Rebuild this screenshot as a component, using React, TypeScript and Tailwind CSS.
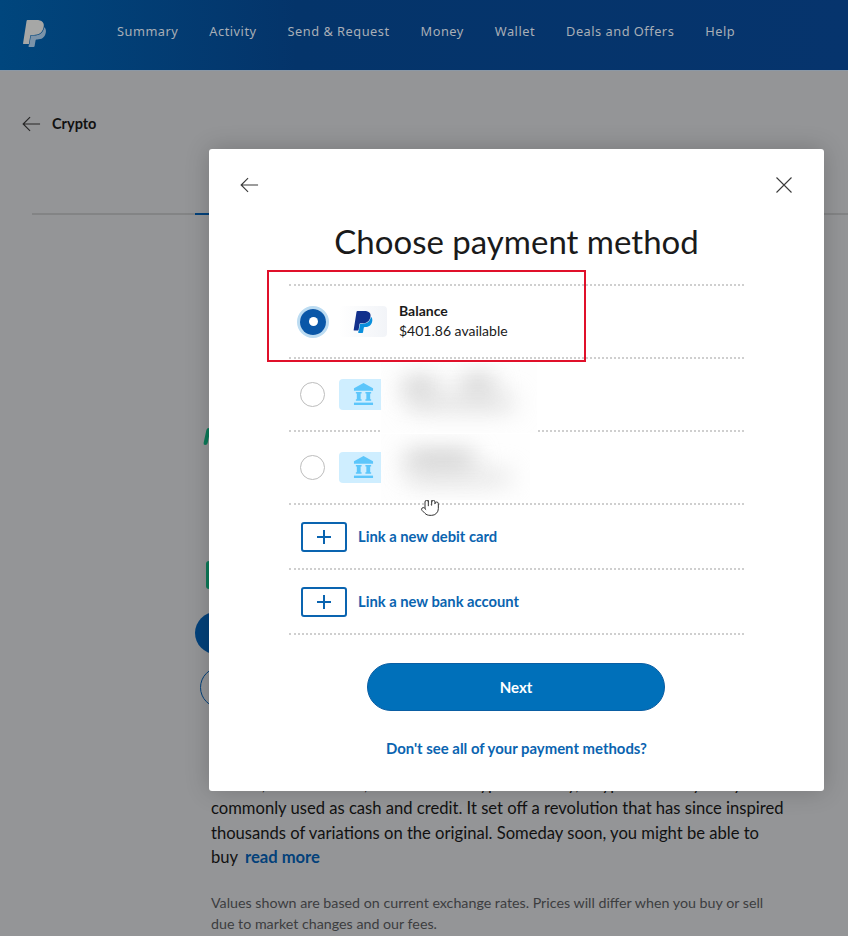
import { Hand } from 'lucide-react';

const navItems = ['Summary', 'Activity', 'Send & Request', 'Money', 'Wallet', 'Deals and Offers', 'Help'];

const backPath = 'M7.076 21.337H2.47a.641.641 0 0 1-.633-.74L4.944.901C5.026.382 5.474 0 5.998 0h7.46c2.57 0 4.578.543 5.69 1.81 1.01 1.15 1.304 2.42 1.012 4.287-.023.143-.047.288-.077.437-.983 5.05-4.349 6.797-8.647 6.797h-2.19c-.524 0-.968.382-1.05.9l-1.12 7.106z';
const frontPath = 'M21.222 6.917a3.35 3.35 0 0 0-.607-.541c-.013.076-.026.175-.041.254-.93 4.778-4.005 7.201-9.138 7.201h-2.19a.563.563 0 0 0-.556.479l-1.187 7.527h-.506l-.24 1.516a.56.56 0 0 0 .554.647h3.882c.46 0 .85-.334.922-.788.06-.26.76-4.852.816-5.09a.932.932 0 0 1 .923-.788h.58c3.76 0 6.705-1.528 7.565-5.946.36-1.847.174-3.388-.777-4.471z';

function PayPalMark({ className, top, under }: { className: string; top: string; under: string }) {
  return (
    <svg viewBox="0 0 24 24" className={className}>
      <path d={frontPath} fill={under} />
      <path d={backPath} fill={top} />
    </svg>
  );
}

function BackArrow({ className }: { className: string }) {
  return (
    <svg viewBox="0 0 20 16" fill="none" stroke="currentColor" strokeWidth="1.2" className={className}>
      <path d="M19 8H1.2M8.5.8 1.2 8l7.3 7.2" />
    </svg>
  );
}

function BankIcon() {
  return (
    <svg viewBox="0 0 22 24" className="h-[23px] w-[21px]" fill="#5cc6fb">
      <path d="M11 0 21 5.5V8H1V5.500z" />
      <path d="M3 9.500h6V11H8v6h1V18.500H3V17h1v-6H3zM13 9.500h6V11h-1v6h1v1.500h-6V17h1v-6h-1z" />
      <path d="M1 20.500h20V23H1z" />
    </svg>
  );
}

function BankRow() {
  return (
    <div className="flex h-[73px] items-center border-t-2 border-dotted border-[#cfcfcf] pl-[11px]">
      <div className="h-[25px] w-[25px] rounded-full border-[1.5px] border-[#bdbdbd]" />
      <div className="ml-[14px] flex h-[31px] w-[48px] items-center justify-center rounded-sm bg-[#cfeeff]">
        <BankIcon />
      </div>
    </div>
  );
}

function AddRow({ label }: { label: string }) {
  return (
    <div className="flex h-[65px] items-center border-t-2 border-dotted border-[#cfcfcf] pl-[12px]">
      <div className="flex h-[30px] w-[46px] items-center justify-center rounded-[3px] border-2 border-[#0a64b0]">
        <svg viewBox="0 0 14 14" className="h-[14px] w-[14px]" stroke="#0a64b0" strokeWidth="2"><path d="M7 0v14M0 7h14" /></svg>
      </div>
      <span className="ml-[11px] text-[14.750px] font-bold text-[#0a64b0]">{label}</span>
    </div>
  );
}

export default function App() {
  return (
    <div className="relative h-[936px] w-[848px] overflow-hidden bg-[#949597] font-['Lato',sans-serif]">
      <header className="flex h-[71px] items-start border-b border-[#8b98a6] bg-[linear-gradient(90deg,#00467d,#04346a_35%,#06346d)] pt-[20px] pl-[21px]">
        <PayPalMark className="h-[27px] w-[27px]" top="#a6a7a6" under="#7b93a9" />
        <nav className="ml-[69px] flex gap-[31px] pt-[2px] font-['Noto_Sans',sans-serif] text-[12.800px] tracking-[0.5px] text-[#a8aeb6]">
          {navItems.map((n) => <span key={n}>{n}</span>)}
        </nav>
      </header>

      <main>
        <div className="flex items-center pt-[42px] pl-[22px]">
          <BackArrow className="h-[16px] w-[19px] text-[#262626]" />
          <span className="ml-[11px] text-[14.500px] font-bold text-[#111]">Crypto</span>
        </div>

        <div className="mt-[78px] ml-[32px] flex h-[2px] bg-[#838485]">
          <div className="ml-[163px] h-[2px] w-[120px] bg-[#03417a]" />
        </div>

        <div className="pl-[195px]">
          <div className="mt-[213px] ml-[10px] h-[17px] w-[4px] -skew-x-12 rounded-sm bg-[#0b7a58]" />
          <div className="mt-[116px] ml-[11px] h-[28px] w-[4px] rounded-l-[3px] bg-[#0b7a58]" />
          <div className="mt-[23px] h-[42px] w-[42px] rounded-full bg-[#03417a]" />
          <div className="mt-[13px] ml-[5px] h-[41px] w-[41px] rounded-full border border-[#03417a]" />
        </div>

        <div className="mt-[64px] ml-[211px] whitespace-nowrap text-[16.600px] leading-[24.500px] text-[#111]">
          <p>
            Bitcoin, born in 2009, was the first cryptocurrency, a type of money not yet<br />
            commonly used as cash and credit. It set off a revolution that has since inspired<br />
            thousands of variations on the original. Someday soon, you might be able to<br />
            buy <span className="ml-[3px] font-bold text-[#03417a]">read more</span>
          </p>
          <p className="mt-[22px] text-[14.250px] leading-[21px] text-[#3c3d3f]">
            Values shown are based on current exchange rates. Prices will differ when you buy or sell<br />
            due to market changes and our fees.
          </p>
        </div>
      </main>

      <div className="absolute top-[149px] left-[209px] h-[642px] w-[615px] rounded-[3px] bg-white shadow-[0_0_24px_rgba(0,0,0,0.2)]">
        <div className="flex items-center justify-between px-[31px] pt-[28px]">
          <BackArrow className="h-[16px] w-[19px] text-[#3a3a3a]" />
          <svg viewBox="0 0 16 16" fill="none" stroke="#3a3a3a" strokeWidth="1.1" className="mr-[1px] h-[16px] w-[16px]">
            <path d="M.5.500l15 15M15.500.500l-15 15" />
          </svg>
        </div>

        <h1 className="mt-[28px] text-center text-[33px] leading-[40px] text-[#1a1a1a]">Choose payment method</h1>

        <div className="relative mt-[23px] ml-[80px] w-[455px]">
          <div className="flex h-[73px] items-center border-t-2 border-dotted border-[#cfcfcf] pl-[8px]">
            <div className="flex h-[32px] w-[32px] items-center justify-center rounded-full border-[3px] border-[#bcdcf2]">
              <div className="flex h-[26px] w-[26px] shrink-0 items-center justify-center rounded-full bg-[#0a57a8]">
                <div className="h-[9px] w-[9px] rounded-full bg-white" />
              </div>
            </div>
            <div className="ml-[10px] flex h-[31px] w-[48px] items-center justify-center rounded-sm bg-gradient-to-r from-white to-[#f2f4f8]">
              <PayPalMark className="h-[22px] w-[22px]" top="#12308c" under="#0a8fdc" />
            </div>
            <div className="ml-[12px] -mt-[2px] text-[14px] leading-[20px] text-[#1a1a1a]">
              <div className="font-bold">Balance</div>
              <div>$401.86 available</div>
            </div>
          </div>
          <BankRow />
          <BankRow />
          <AddRow label="Link a new debit card" />
          <AddRow label="Link a new bank account" />
          <div className="border-t-2 border-dotted border-[#cfcfcf]" />

          <Hand size={20} strokeWidth={1.2} fill="white" className="absolute top-[213px] left-[131px] text-[#333]" />

          <div className="absolute top-[79px] left-[92px] h-[70px] w-[156px] overflow-hidden bg-[#fefefe]">
            <div className="absolute top-[16px] left-[22px] h-[16px] w-[34px] rounded-full bg-[#c4c4c4] blur-md" />
            <div className="absolute top-[14px] left-[80px] h-[16px] w-[34px] rounded-full bg-[#c4c4c4] blur-md" />
            <div className="absolute top-[34px] left-[26px] h-[12px] w-[108px] rounded-full bg-[#d4d4d4] blur-md" />
          </div>
          <div className="absolute top-[150px] left-[92px] h-[66px] w-[149px] overflow-hidden bg-[#fefefe]">
            <div className="absolute top-[18px] left-[24px] h-[16px] w-[70px] rounded-full bg-[#c4c4c4] blur-md" />
            <div className="absolute top-[38px] left-[26px] h-[11px] w-[104px] rounded-full bg-[#d8d8d8] blur-md" />
          </div>

          <div className="absolute -top-[14px] -left-[22px] h-[92px] w-[319px] border-2 border-[#e0102a]" />
        </div>

        <div className="mt-[28px] ml-[158px]">
          <button className="h-[48px] w-[298px] rounded-full border border-[#0a5ea3] bg-[#0070ba] text-[15px] font-bold text-white">Next</button>
        </div>
        <div className="mt-[26px] text-center text-[14.900px] font-bold text-[#0a64b0]">Don't see all of your payment methods?</div>
      </div>
    </div>
  );
}
